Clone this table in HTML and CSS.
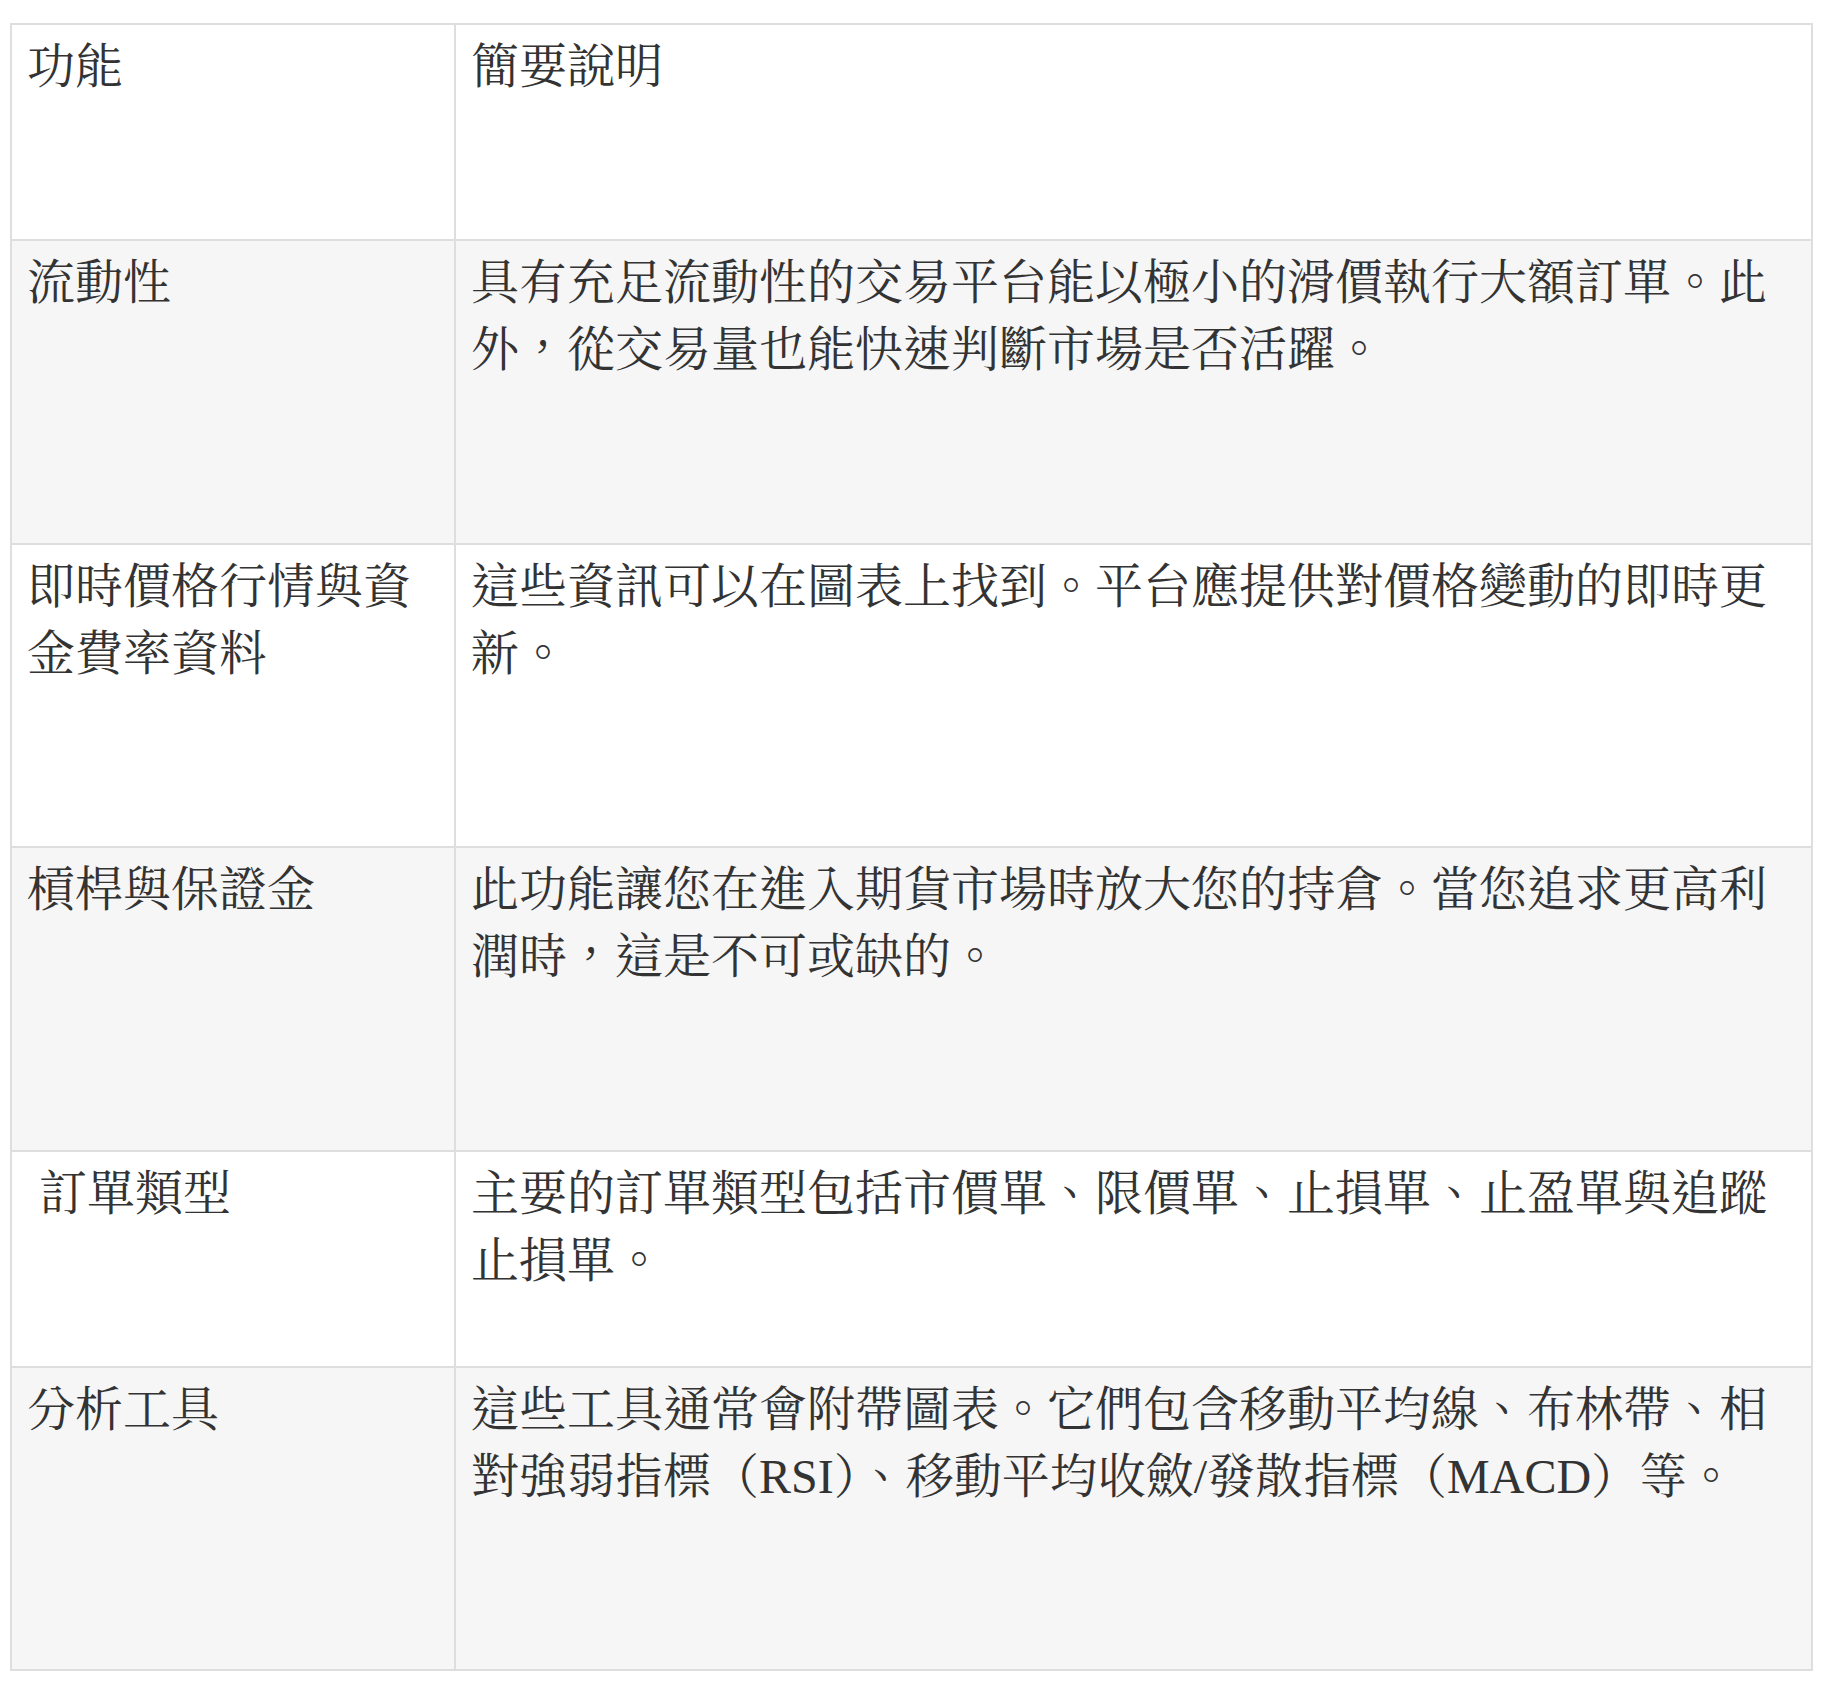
FILE: index.html
```html
<!DOCTYPE html>
<html lang="zh-Hant">
<head>
<meta charset="utf-8">
<title>功能比較</title>
<link rel="stylesheet" href="styles.css">
</head>
<body>
<div class="page">
  <table class="features">
    <colgroup>
      <col class="col-name">
      <col class="col-desc">
    </colgroup>
    <tbody>
      <tr class="short">
        <td>功能</td>
        <td>簡要說明</td>
      </tr>
      <tr class="tall alt">
        <td>流動性</td>
        <td>具有充足流動性的交易平台能以極小的滑價執行大額訂單。此外，從交易量也能快速判斷市場是否活躍。</td>
      </tr>
      <tr class="tall">
        <td>即時價格行情與資金費率資料</td>
        <td>這些資訊可以在圖表上找到。平台應提供對價格變動的即時更新。</td>
      </tr>
      <tr class="tall alt">
        <td>槓桿與保證金</td>
        <td>此功能讓您在進入期貨市場時放大您的持倉。當您追求更高利潤時，這是不可或缺的。</td>
      </tr>
      <tr class="short">
        <td>&nbsp;訂單類型</td>
        <td>主要的訂單類型包括市價單、限價單、止損單、止盈單與追蹤止損單。</td>
      </tr>
      <tr class="tall alt">
        <td>分析工具</td>
        <td>這些工具通常會附帶圖表。它們包含移動平均線、布林帶、相對強弱指標（RSI）、移動平均收斂/發散指標（MACD）等。</td>
      </tr>
    </tbody>
  </table>
</div>
</body>
</html>
```

FILE: styles.css
```css
html, body {
  margin: 0;
  padding: 0;
  background: #ffffff;
}

.page {
  padding: 23px 0 0 10px;
}

.features {
  width: 1803px;
  table-layout: fixed;
  border-collapse: separate;
  border-spacing: 0;
  border: 1px solid #dedede;
  font-family: "Liberation Serif", "Noto Serif CJK TC", "Noto Sans CJK TC", serif;
  font-size: 48px;
  line-height: 67px;
  color: #333333;
}

.col-name {
  width: 444px;
}

.features td {
  border: 1px solid #dedede;
  padding: 8px 15px 0 15px;
  vertical-align: top;
  word-break: break-all;
}

.features tr.short {
  height: 216px;
}

.features tr.tall {
  height: 303.5px;
}

.features tr.alt td {
  background: #f6f6f6;
}
```
